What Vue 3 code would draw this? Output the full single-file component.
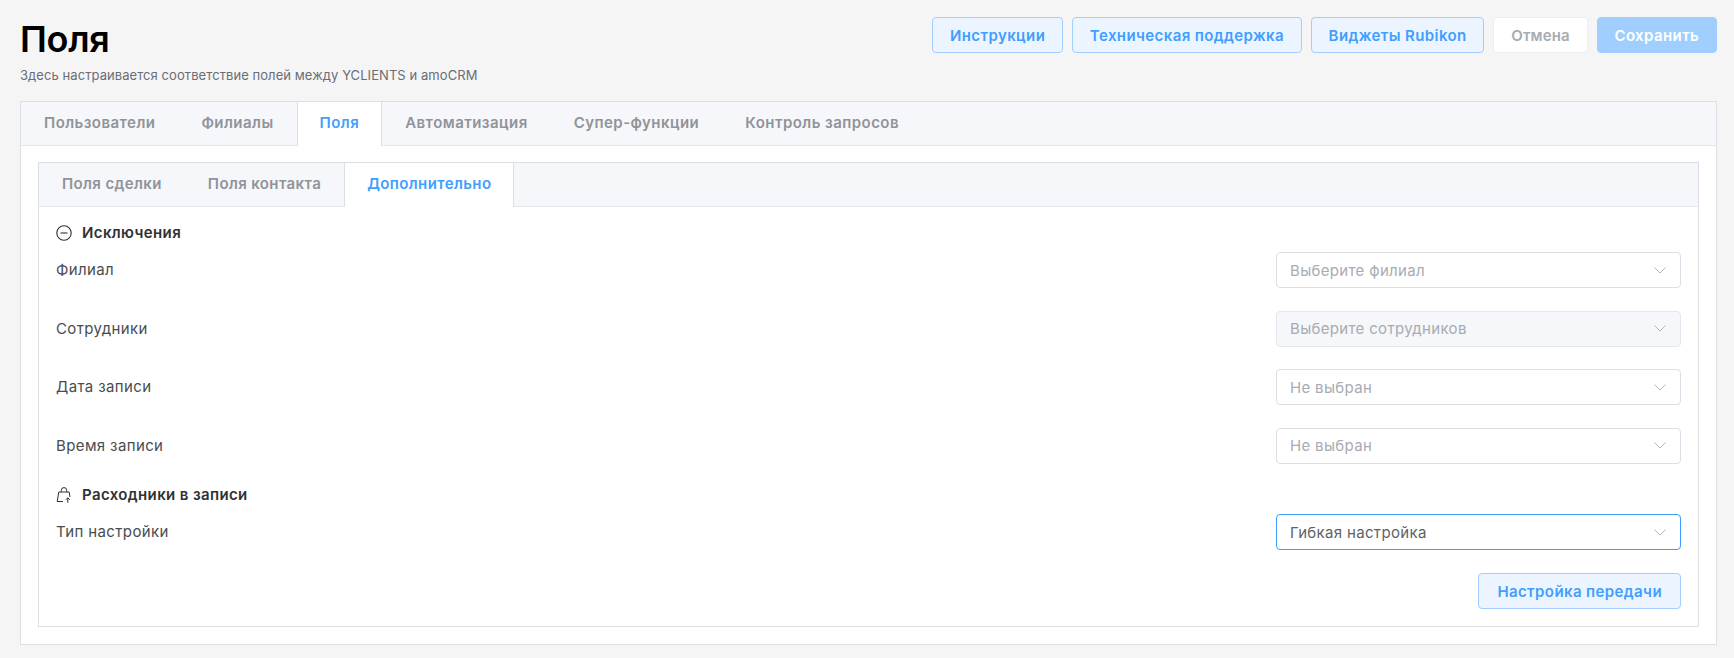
<script setup>
const mainTabs = ['Пользователи', 'Филиалы', 'Поля', 'Автоматизация', 'Супер-функции', 'Контроль запросов']
const subTabs = ['Поля сделки', 'Поля контакта', 'Дополнительно']

const exclusions = [
  { label: 'Филиал', placeholder: 'Выберите филиал' },
  { label: 'Сотрудники', placeholder: 'Выберите сотрудников', disabled: true },
  { label: 'Дата записи', placeholder: 'Не выбран' },
  { label: 'Время записи', placeholder: 'Не выбран' },
]
</script>

<template>
  <div class="page">
    <header class="page-head">
      <div>
        <h1 class="title">Поля</h1>
        <p class="subtitle">Здесь настраивается соответствие полей между YCLIENTS и amoCRM</p>
      </div>
      <div class="head-actions">
        <button class="btn btn-light">Инструкции</button>
        <button class="btn btn-light">Техническая поддержка</button>
        <button class="btn btn-light">Виджеты Rubikon</button>
        <button class="btn btn-cancel">Отмена</button>
        <button class="btn btn-save">Сохранить</button>
      </div>
    </header>

    <section class="tabs-card">
      <div class="tabs-bar">
        <div v-for="tab in mainTabs" :key="tab" class="tab" :class="{ active: tab === 'Поля' }">{{ tab }}</div>
      </div>
      <div class="tabs-body">
        <section class="tabs-card">
          <div class="tabs-bar">
            <div v-for="tab in subTabs" :key="tab" class="tab sub-tab" :class="{ active: tab === 'Дополнительно' }">{{ tab }}</div>
          </div>
          <div class="form-body">
            <div class="section-title">
              <svg class="section-icon" viewBox="0 0 16 16" fill="none" stroke="#303133" stroke-width="1.1">
                <circle cx="8" cy="8" r="7.2" />
                <path d="M4.500 8h7" />
              </svg>
              Исключения
            </div>
            <div v-for="row in exclusions" :key="row.label" class="form-row">
              <span class="form-label">{{ row.label }}</span>
              <div class="select" :class="{ disabled: row.disabled }">
                <span class="placeholder">{{ row.placeholder }}</span>
                <svg class="chevron" viewBox="0 0 12 7" fill="none" stroke="#b4b6bb" stroke-width="1">
                  <path d="M0.500 0.500l5.500 5.500 5.500-5.500" />
                </svg>
              </div>
            </div>

            <div class="section-title">
              <svg class="section-icon" viewBox="0 0 16 16" fill="none" stroke="#303133" stroke-width="1">
                <path d="M7 14.500H1.200L2.800 5h10.400l0.800 5" />
                <path d="M5.300 5V3.300a2.700 2.700 0 0 1 5.400 0V5" />
                <path d="M11.800 15.800v-5M9.800 12.800l2-2 2 2" />
              </svg>
              Расходники в записи
            </div>
            <div class="form-row form-row-last">
              <span class="form-label">Тип настройки</span>
              <div class="select focused">
                <span class="value">Гибкая настройка</span>
                <svg class="chevron" viewBox="0 0 12 7" fill="none" stroke="#b4b6bb" stroke-width="1">
                  <path d="M0.500 0.500l5.500 5.500 5.500-5.500" />
                </svg>
              </div>
            </div>
            <div class="form-foot">
              <button class="btn btn-light btn-wide">Настройка передачи</button>
            </div>
          </div>
        </section>
      </div>
    </section>
  </div>
</template>

<style>
html,
body {
  background: #f5f5f5;
}
</style>

<style scoped>
.page {
  box-sizing: border-box;
  height: 658px;
  padding: 17px 17px 13px 20px;
  background: #f5f5f5;
  font-family: Inter, 'Noto Sans', sans-serif;
  overflow: hidden;
}

.page-head {
  display: flex;
  justify-content: space-between;
  align-items: flex-start;
  height: 84px;
}

.title {
  margin: 0;
  font-size: 36px;
  line-height: 44px;
  font-weight: 600;
  letter-spacing: -0.3px;
  color: #000;
}

.subtitle {
  margin: 6px 0 0;
  font-size: 13px;
  line-height: 16px;
  letter-spacing: 0.07px;
  color: #6a6d75;
}

.head-actions {
  display: flex;
  gap: 9px;
}

.btn {
  box-sizing: border-box;
  height: 36px;
  padding: 0 16.800px;
  border: 1px solid #a0cfff;
  border-radius: 4px;
  font-family: inherit;
  font-size: 15px;
  font-weight: 600;
  letter-spacing: 0.4px;
}

.btn-light {
  background: #ecf5ff;
  color: #409eff;
}

.btn-wide {
  padding: 0 18px;
}

.btn-cancel {
  background: #fff;
  border-color: #ebeef5;
  color: #a8abb2;
  letter-spacing: 0.15px;
}

.btn-save {
  background: #a0cfff;
  color: #fff;
}

.tabs-card {
  background: #fff;
  border: 1px solid #dcdfe6;
}

.tabs-bar {
  display: flex;
  height: 43px;
  background: #f5f7fa;
  border-bottom: 1px solid #e4e7ed;
}

.tab {
  box-sizing: border-box;
  height: 44px;
  padding: 0 22px;
  font-size: 15px;
  font-weight: 600;
  line-height: 42px;
  letter-spacing: 0.45px;
  color: #909399;
  border-left: 1px solid transparent;
  border-right: 1px solid transparent;
}

.sub-tab {
  letter-spacing: 0.38px;
}

.tab:first-child {
  padding-left: 23px;
  border-left: 0;
}

.tab.active {
  background: #fff;
  color: #409eff;
  border-left-color: #dcdfe6;
  border-right-color: #dcdfe6;
}

.tabs-body {
  padding: 16px 17px 17px;
}

.form-body {
  padding: 17.500px 17px 17px;
}

.section-title {
  display: flex;
  align-items: center;
  gap: 10px;
  height: 16px;
  margin-bottom: 11.500px;
  font-size: 15px;
  font-weight: 600;
  letter-spacing: 0.38px;
  color: #303133;
}

.section-icon {
  width: 16px;
  height: 16px;
  flex: none;
}

.form-row {
  display: flex;
  justify-content: space-between;
  align-items: center;
  margin-bottom: 22.670px;
}

.form-row-last {
  margin-bottom: 23px;
}

.form-label {
  padding-bottom: 1px;
  font-size: 15px;
  letter-spacing: 0.38px;
  color: #4a4c50;
}

.select {
  box-sizing: border-box;
  display: flex;
  align-items: center;
  justify-content: space-between;
  width: 405px;
  height: 36px;
  padding: 0 14px 0 13px;
  background: #fff;
  border: 1px solid #dcdfe6;
  border-radius: 4px;
  font-size: 15px;
  letter-spacing: 0.33px;
}

.select.disabled {
  background: #f5f7fa;
  border-color: #e4e7ed;
}

.select.focused {
  border-color: #409eff;
}

.placeholder {
  color: #a8abb2;
}

.value {
  color: #606266;
}

.chevron {
  width: 12px;
  height: 7px;
}

.form-foot {
  display: flex;
  justify-content: flex-end;
}
</style>
